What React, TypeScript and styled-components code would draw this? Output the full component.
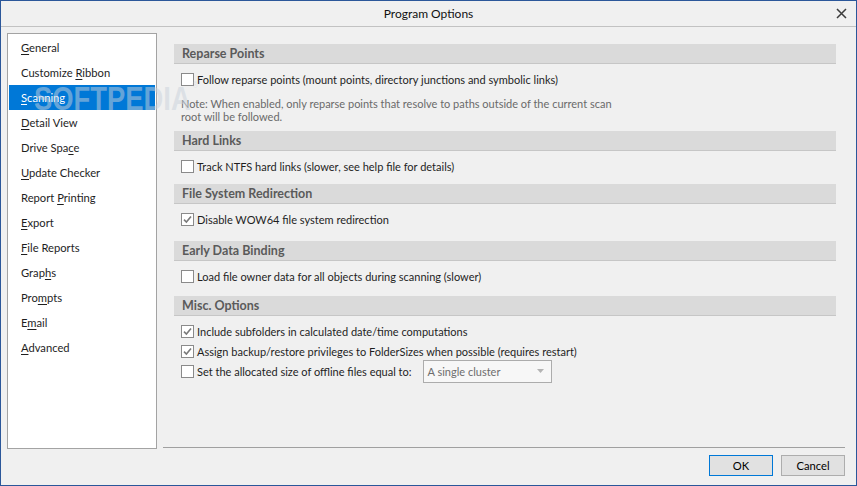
import React from "react";
import styled, { createGlobalStyle } from "styled-components";

const GlobalStyle = createGlobalStyle`
  html, body {
    margin: 0;
    padding: 0;
    background: #f0f0f0;
  }
  * {
    box-sizing: border-box;
  }
`;

const Window = styled.div`
  position: relative;
  width: 857px;
  height: 486px;
  border: 1px solid #2b579a;
  background: #f0f0f0;
  display: flex;
  flex-direction: column;
  font-family: "Segoe UI", Lato, "Noto Sans", sans-serif;
  font-size: 11px;
  color: #1e1e1e;
  overflow: hidden;
`;

const TitleBar = styled.div`
  height: 26px;
  flex: none;
  border-bottom: 1px solid #c2c2c2;
  display: grid;
  grid-template-columns: 40px 1fr 40px;
  align-items: center;
`;

const Title = styled.div`
  text-align: center;
  color: #111;
  font-size: 12px;
`;

const CloseButton = styled.div`
  justify-self: end;
  margin-right: 9px;
  width: 12px;
  height: 12px;
  display: flex;
  align-items: center;
  justify-content: center;
`;

const Main = styled.div`
  display: flex;
  padding: 6px 11px 0 6px;
  gap: 6px;
`;

const Sidebar = styled.div`
  width: 150px;
  height: 416px;
  flex: none;
  background: #fff;
  border: 1px solid #a3a3a3;
  padding: 1px;
  display: flex;
  flex-direction: column;
`;

const NavItem = styled.div<{ $active?: boolean }>`
  height: 25px;
  line-height: 25px;
  padding-left: 12px;
  font-size: 11.2px;
  background: ${(p) => (p.$active ? "#0078d7" : "transparent")};
  color: ${(p) => (p.$active ? "#fff" : "#1e1e1e")};
  white-space: nowrap;
`;

const Mn = styled.span`
  text-decoration: underline;
  text-underline-offset: 2px;
`;

const Content = styled.div`
  flex: 1;
  height: 415px;
  border-bottom: 1px solid #a0a0a0;
  padding: 11px 9px 0 11px;
  display: flex;
  flex-direction: column;
`;

const Section = styled.div<{ $gap: number }>`
  display: flex;
  flex-direction: column;
  margin-bottom: ${(p) => p.$gap}px;
`;

const Header = styled.div`
  height: 20px;
  background: #dadada;
  border-bottom: 1px solid #c6c6c6;
  padding-left: 8px;
  font-weight: bold;
  font-size: 12.5px;
  color: #5a5a5a;
  line-height: 19px;
  margin-bottom: 5px;
`;

const Row = styled.div`
  height: 20px;
  display: flex;
  align-items: center;
  padding-left: 7px;
  white-space: nowrap;
  font-size: 11px;
`;

const Box = styled.span`
  width: 13px;
  height: 13px;
  flex: none;
  border: 1px solid #8a8a8a;
  background: #fff;
  margin-right: 3px;
  display: flex;
  align-items: center;
  justify-content: center;
`;

const Note = styled.div`
  margin-top: 8px;
  padding-left: 7px;
  color: #6a6a6a;
  font-size: 11px;
  line-height: 13px;
`;

const Select = styled.div`
  margin-left: 11px;
  width: 129px;
  height: 23px;
  border: 1px solid #acacac;
  background: #f7f7f7;
  color: #6d6d6d;
  display: flex;
  align-items: center;
  justify-content: space-between;
  padding: 0 7px 0 4px;
`;

const Footer = styled.div`
  display: flex;
  justify-content: flex-end;
  gap: 8px;
  padding: 6px 11px 0 0;
`;

const Button = styled.div<{ $primary?: boolean }>`
  width: 64px;
  height: 21px;
  border: 1px solid ${(p) => (p.$primary ? "#0078d7" : "#adadad")};
  background: #e1e1e1;
  color: #000;
  font-size: 11.2px;
  display: flex;
  align-items: center;
  justify-content: center;
`;

const Watermark = styled.div`
  position: absolute;
  left: 33px;
  top: 79px;
  font-family: "Liberation Sans", Arial, sans-serif;
  font-weight: bold;
  font-size: 33px;
  line-height: 1.15;
  color: rgba(200, 208, 218, 0.5);
  transform: scaleX(0.83);
  transform-origin: left top;
  pointer-events: none;
  white-space: nowrap;
`;

const Reg = styled.sup`
  font-size: 9px;
  font-weight: normal;
  vertical-align: top;
  margin-left: 2px;
`;

const Check = () => (
  <svg width="9" height="9" viewBox="0 0 9 9">
    <path d="M1 4.6 L3.4 7 L8 1.6" fill="none" stroke="#7a7a7a" strokeWidth="1.6" />
  </svg>
);

const CheckBox = ({ checked }: { checked?: boolean }) => <Box>{checked && <Check />}</Box>;

export default function App() {
  return (
    <>
      <GlobalStyle />
      <Window>
        <TitleBar>
          <span />
          <Title>Program Options</Title>
          <CloseButton>
            <svg width="11" height="11" viewBox="0 0 11 11">
              <path d="M1 1 L10 10 M10 1 L1 10" stroke="#3c3c3c" strokeWidth="1.5" />
            </svg>
          </CloseButton>
        </TitleBar>
        <Main>
          <Sidebar>
            <NavItem><Mn>G</Mn>eneral</NavItem>
            <NavItem>Customize <Mn>R</Mn>ibbon</NavItem>
            <NavItem $active><Mn>S</Mn>canning</NavItem>
            <NavItem><Mn>D</Mn>etail View</NavItem>
            <NavItem>Drive Spa<Mn>c</Mn>e</NavItem>
            <NavItem><Mn>U</Mn>pdate Checker</NavItem>
            <NavItem>Report <Mn>P</Mn>rinting</NavItem>
            <NavItem><Mn>E</Mn>xport</NavItem>
            <NavItem><Mn>F</Mn>ile Reports</NavItem>
            <NavItem>Grap<Mn>h</Mn>s</NavItem>
            <NavItem>Pro<Mn>m</Mn>pts</NavItem>
            <NavItem>E<Mn>m</Mn>ail</NavItem>
            <NavItem><Mn>A</Mn>dvanced</NavItem>
          </Sidebar>
          <Content>
            <Section $gap={8}>
              <Header>Reparse Points</Header>
              <Row>
                <CheckBox />
                Follow reparse points (mount points, directory junctions and symbolic links)
              </Row>
              <Note>
                Note: When enabled, only reparse points that resolve to paths outside of the current scan
                <br />
                root will be followed.
              </Note>
            </Section>
            <Section $gap={8}>
              <Header>Hard Links</Header>
              <Row>
                <CheckBox />
                Track NTFS hard links (slower, see help file for details)
              </Row>
            </Section>
            <Section $gap={12}>
              <Header>File System Redirection</Header>
              <Row>
                <CheckBox checked />
                Disable WOW64 file system redirection
              </Row>
            </Section>
            <Section $gap={10}>
              <Header>Early Data Binding</Header>
              <Row>
                <CheckBox />
                Load file owner data for all objects during scanning (slower)
              </Row>
            </Section>
            <Section $gap={0}>
              <Header>Misc. Options</Header>
              <Row>
                <CheckBox checked />
                Include subfolders in calculated date/time computations
              </Row>
              <Row>
                <CheckBox checked />
                Assign backup/restore privileges to FolderSizes when possible (requires restart)
              </Row>
              <Row>
                <CheckBox />
                Set the allocated size of offline files equal to:
                <Select>
                  A single cluster
                  <svg width="7" height="4" viewBox="0 0 7 4">
                    <path d="M0 0 L7 0 L3.5 4 Z" fill="#b4b4b4" />
                  </svg>
                </Select>
              </Row>
            </Section>
          </Content>
        </Main>
        <Footer>
          <Button $primary>OK</Button>
          <Button>Cancel</Button>
        </Footer>
        <Watermark>
          SOFTPEDIA<Reg>®</Reg>
        </Watermark>
      </Window>
    </>
  );
}
